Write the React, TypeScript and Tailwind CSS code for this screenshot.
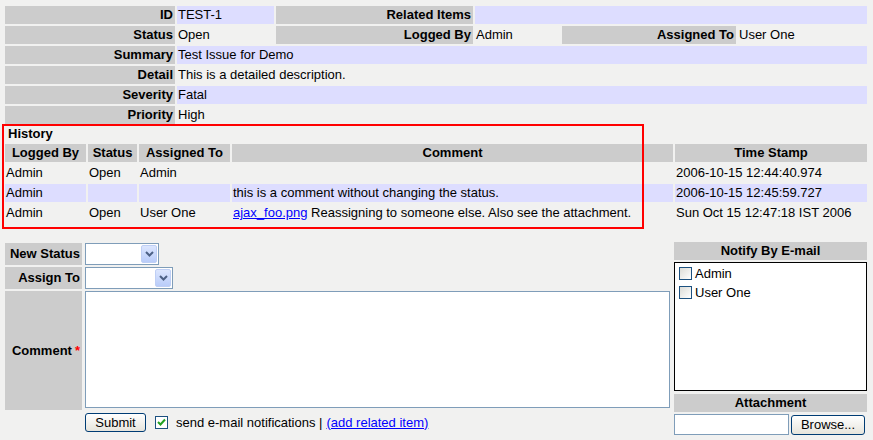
import React from "react";

const FONT = { fontFamily: '"Liberation Sans", Arial, sans-serif' };

const label = "bg-[#cccccc] font-bold text-right pr-[2px] leading-[18px] h-[18px] whitespace-nowrap";
const val = "pl-[1px] leading-[18px] h-[18px] whitespace-nowrap";
const lav = "bg-[#ddddff]";

function SelectBox({ width }: { width: number }) {
  return (
    <div
      className="h-[22px] border border-[#7f9db9] bg-white flex justify-end items-center pr-[1px]"
      style={{ width }}
    >
      <div className="w-[16px] h-[18px] rounded-[2px] bg-gradient-to-b from-[#dce6fe] to-[#b9ccf9] border border-[#bfcff5] flex items-center justify-center">
        <svg width="9" height="6" viewBox="0 0 9 6">
          <path d="M1 1 L4.5 4.5 L8 1" stroke="#4d6185" strokeWidth="2" fill="none" />
        </svg>
      </div>
    </div>
  );
}

function XpCheck({ checked }: { checked?: boolean }) {
  return (
    <div
      className={
        "w-[13px] h-[13px] border border-[#1c5180] flex items-center justify-center shrink-0 " +
        (checked ? "bg-white" : "bg-gradient-to-br from-[#dcdcd7] to-[#ffffff]")
      }
    >
      {checked && (
        <svg width="9" height="9" viewBox="0 0 9 9">
          <path d="M1 4 L3.5 6.5 L8 1.5" stroke="#21a121" strokeWidth="2" fill="none" />
        </svg>
      )}
    </div>
  );
}

const HISTORY = [
  { by: "Admin", status: "Open", to: "Admin", comment: "", ts: "2006-10-15 12:44:40.974" },
  { by: "Admin", status: "", to: "", comment: "this is a comment without changing the status.", ts: "2006-10-15 12:45:59.727" },
  { by: "Admin", status: "Open", to: "User One", comment: "link", ts: "Sun Oct 15 12:47:18 IST 2006" },
];

export default function App() {
  return (
    <div
      className="relative w-[873px] h-[440px] overflow-hidden bg-[#f1f1f0] text-[13px] text-black"
      style={FONT}
    >
      {/* issue details */}
      <div className="pt-[6px] pl-[5px]">
        <div className="grid grid-cols-[170px_97px_197px_85px_174px_129px] gap-[2px]">
          <div className={label}>ID</div>
          <div className={`${val} ${lav}`}>TEST-1</div>
          <div className={label}>Related Items</div>
          <div className={`${val} ${lav} col-span-3`}></div>

          <div className={label}>Status</div>
          <div className={val}>Open</div>
          <div className={label}>Logged By</div>
          <div className={val}>Admin</div>
          <div className={label}>Assigned To</div>
          <div className={val}>User One</div>

          <div className={label}>Summary</div>
          <div className={`${val} ${lav} col-span-5`}>Test Issue for Demo</div>
          <div className={label}>Detail</div>
          <div className={`${val} col-span-5`}>This is a detailed description.</div>
          <div className={label}>Severity</div>
          <div className={`${val} ${lav} col-span-5`}>Fatal</div>
          <div className={label}>Priority</div>
          <div className={`${val} col-span-5`}>High</div>
        </div>
      </div>

      {/* history */}
      <div className="pl-[5px]">
        <div className="h-[20px] leading-[20px] pl-[3px] font-bold">History</div>
        <div className="grid grid-cols-[81px_49px_91px_441px_192px] gap-[2px]">
          {["Logged By", "Status", "Assigned To", "Comment", "Time Stamp"].map((h) => (
            <div key={h} className="bg-[#cccccc] font-bold text-center leading-[18px] h-[18px]">
              {h}
            </div>
          ))}
          {HISTORY.map((r, i) => {
            const bg = i === 1 ? lav : "";
            return (
              <React.Fragment key={i}>
                <div className={`${val} ${bg}`}>{r.by}</div>
                <div className={`${val} ${bg}`}>{r.status}</div>
                <div className={`${val} ${bg}`}>{r.to}</div>
                <div className={`${val} ${bg}`}>
                  {r.comment === "link" ? (
                    <>
                      <a href="#" className="text-[#0000ff] underline">ajax_foo.png</a> Reassigning to someone else. Also see the attachment.
                    </>
                  ) : (
                    r.comment
                  )}
                </div>
                <div className={`${val} ${bg}`}>{r.ts}</div>
              </React.Fragment>
            );
          })}
        </div>
      </div>

      {/* update form */}
      <div className="flex pl-[5px] mt-[20px]">
        <div className="w-[665px] mt-[1px]">
          <div className="grid grid-cols-[77px_1fr] gap-x-[2px] gap-y-[2px]">
            <div className="bg-[#cccccc] font-bold text-right pr-[2px] h-[22px] leading-[22px] whitespace-nowrap">New Status</div>
            <div className="pl-[1px]"><SelectBox width={74} /></div>
            <div className="bg-[#cccccc] font-bold text-right pr-[2px] h-[22px] leading-[22px] whitespace-nowrap">Assign To</div>
            <div className="pl-[1px]"><SelectBox width={88} /></div>
            <div className="bg-[#cccccc] font-bold text-right pr-[2px] h-[119px] flex items-center justify-end whitespace-nowrap">
              Comment<span className="text-[#ff0000] ml-[3px]">*</span>
            </div>
            <div className="pl-[1px]">
              <div className="h-[117px] border border-[#7f9db9] bg-white"></div>
            </div>
          </div>
          <div className="flex items-center mt-[3px] pl-[80px] h-[19px]">
            <button className="w-[61px] h-[19px] rounded-[3px] border border-[#003c74] bg-gradient-to-b from-[#ffffff] to-[#e6e4dc] text-[13px] leading-[17px] text-black">
              Submit
            </button>
            <div className="ml-[9px]"><XpCheck checked /></div>
            <span className="ml-[8px] whitespace-nowrap">send e-mail notifications | </span>
            <a href="#" className="ml-[4px] text-[#0000ff] underline whitespace-nowrap">(add related item)</a>
          </div>
        </div>

        <div className="ml-[4px] w-[193px]">
          <div className="bg-[#cccccc] font-bold text-center h-[18px] leading-[18px]">Notify By E-mail</div>
          <div className="mt-[2px] h-[129px] border border-black bg-white pt-[4px] pl-[4px] flex flex-col gap-[6px]">
            <div className="flex items-center gap-[3px] h-[13px]">
              <XpCheck /> <span>Admin</span>
            </div>
            <div className="flex items-center gap-[3px] h-[13px]">
              <XpCheck /> <span>User One</span>
            </div>
          </div>
          <div className="mt-[3px] bg-[#cccccc] font-bold text-center h-[18px] leading-[18px]">Attachment</div>
          <div className="mt-[2px] flex items-start gap-[2px]">
            <div className="w-[115px] h-[21px] border border-[#7f9db9] bg-white"></div>
            <button className="w-[74px] h-[20px] mt-[1px] rounded-[3px] border border-[#003c74] bg-gradient-to-b from-[#ffffff] to-[#e6e4dc] text-[13px] leading-[18px] text-black">
              Browse...
            </button>
          </div>
        </div>
      </div>

      {/* annotation highlight */}
      <div className="absolute left-[2px] top-[124px] w-[642px] h-[105px] border-2 border-[#ff0000] pointer-events-none"></div>
    </div>
  );
}
